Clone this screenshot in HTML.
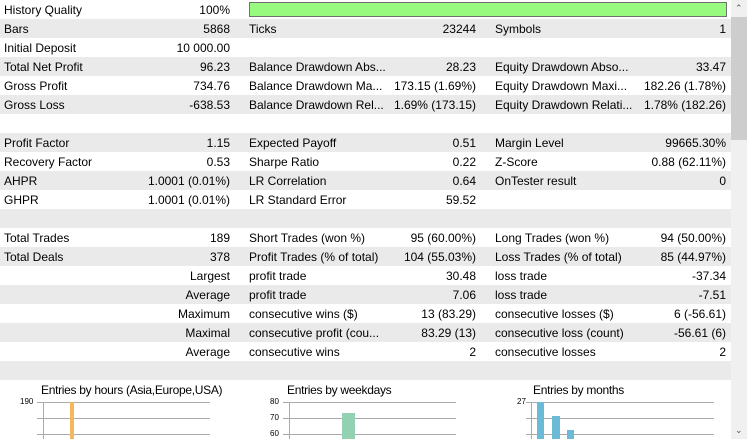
<!DOCTYPE html><html><head><style>
body{margin:0;width:747px;height:439px;overflow:hidden;background:#fff;font-family:"Liberation Sans",sans-serif;font-size:12px;color:#000;position:relative}
.r{position:absolute;left:0;width:731px;height:19px}
.g{background:#eaeaea}
.t{position:absolute;top:3px;white-space:nowrap}
.v{position:absolute;top:3px;text-align:right;white-space:nowrap}
.sb{position:absolute;left:731px;top:0;width:16px;height:439px;background:#f0f0f0}
.ax{position:absolute;font-size:8px}
.gl{position:absolute;height:1px;background:#aaa}
</style></head><body>
<div id="rows"></div>
<div style="position:absolute;left:249px;top:2px;width:476px;height:13px;border:1px solid #707070;background:#98fb80"></div>
<div class="sb"><div style="position:absolute;left:0;top:17px;width:16px;height:123px;background:#cdcdcd"></div>
<div style="position:absolute;left:4px;top:3px;font-size:9px;color:#555">&#8963;</div>
<div style="position:absolute;left:4px;top:425px;font-size:9px;color:#555">&#8964;</div></div>
<script>
var d=[
["History Quality","100%","","","",""],
["Bars","5868","Ticks","23244","Symbols","1"],
["Initial Deposit","10 000.00","","","",""],
["Total Net Profit","96.23","Balance Drawdown Abs...","28.23","Equity Drawdown Abso...","33.47"],
["Gross Profit","734.76","Balance Drawdown Ma...","173.15 (1.69%)","Equity Drawdown Maxi...","182.26 (1.78%)"],
["Gross Loss","-638.53","Balance Drawdown Rel...","1.69% (173.15)","Equity Drawdown Relati...","1.78% (182.26)"],
["","","","","",""],
["Profit Factor","1.15","Expected Payoff","0.51","Margin Level","99665.30%"],
["Recovery Factor","0.53","Sharpe Ratio","0.22","Z-Score","0.88 (62.11%)"],
["AHPR","1.0001 (0.01%)","LR Correlation","0.64","OnTester result","0"],
["GHPR","1.0001 (0.01%)","LR Standard Error","59.52","",""],
["","","","","",""],
["Total Trades","189","Short Trades (won %)","95 (60.00%)","Long Trades (won %)","94 (50.00%)"],
["Total Deals","378","Profit Trades (% of total)","104 (55.03%)","Loss Trades (% of total)","85 (44.97%)"],
["*Largest","","profit trade","30.48","loss trade","-37.34"],
["*Average","","profit trade","7.06","loss trade","-7.51"],
["*Maximum","","consecutive wins ($)","13 (83.29)","consecutive losses ($)","6 (-56.61)"],
["*Maximal","","consecutive profit (cou...","83.29 (13)","consecutive loss (count)","-56.61 (6)"],
["*Average","","consecutive wins","2","consecutive losses","2"],
["","","","","",""]];
var h="";
d.forEach(function(r,i){
h+='<div class="r'+(i%2?' g':'')+'" style="top:'+(i*19)+'px">';
if(r[0][0]=="*")h+='<div class="v" style="right:501px">'+r[0].slice(1)+'</div>';
else h+='<div class="t" style="left:4px">'+r[0]+'</div><div class="v" style="right:501px">'+r[1]+'</div>';
h+='<div class="t" style="left:249px">'+r[2]+'</div><div class="v" style="right:255px">'+r[3]+'</div>';
h+='<div class="t" style="left:495px">'+r[4]+'</div><div class="v" style="right:5px">'+r[5]+'</div></div>';
});
document.getElementById("rows").innerHTML=h;
</script>
<div style="position:absolute;left:41px;top:383px;font-size:12px;letter-spacing:-0.3px">Entries by hours (Asia,Europe,USA)</div>
<div style="position:absolute;left:287px;top:383px;font-size:12px;letter-spacing:-0.3px">Entries by weekdays</div>
<div style="position:absolute;left:533px;top:383px;font-size:12px;letter-spacing:-0.3px">Entries by months</div>
<div class="ax" style="left:20px;top:397px">190</div>
<div class="ax" style="left:270px;top:397px">80</div><div class="ax" style="left:270px;top:413px">70</div><div class="ax" style="left:270px;top:429px">60</div>
<div class="ax" style="left:517px;top:397px">27</div>
<div class="gl" style="left:37px;top:402px;width:173px"></div><div class="gl" style="left:37px;top:418px;width:173px"></div><div class="gl" style="left:37px;top:434px;width:173px"></div>
<div class="gl" style="left:283px;top:402px;width:173px"></div><div class="gl" style="left:283px;top:418px;width:173px"></div><div class="gl" style="left:283px;top:434px;width:173px"></div>
<div class="gl" style="left:526px;top:402px;width:188px"></div><div class="gl" style="left:526px;top:418px;width:188px"></div><div class="gl" style="left:526px;top:434px;width:188px"></div>
<div style="position:absolute;left:43px;top:402px;width:1px;height:37px;background:#aaa"></div>
<div style="position:absolute;left:289px;top:402px;width:1px;height:37px;background:#aaa"></div>
<div style="position:absolute;left:531px;top:402px;width:1px;height:37px;background:#aaa"></div>
<div style="position:absolute;left:70px;top:402px;width:4px;height:37px;background:#f5b660"></div>
<div style="position:absolute;left:342px;top:413px;width:13px;height:26px;background:#92d1b1"></div>
<div style="position:absolute;left:537px;top:402px;width:7px;height:37px;background:#6bbbd6"></div>
<div style="position:absolute;left:552px;top:416px;width:8px;height:23px;background:#6bbbd6"></div>
<div style="position:absolute;left:567px;top:430px;width:7px;height:9px;background:#6bbbd6"></div>
</body></html>
